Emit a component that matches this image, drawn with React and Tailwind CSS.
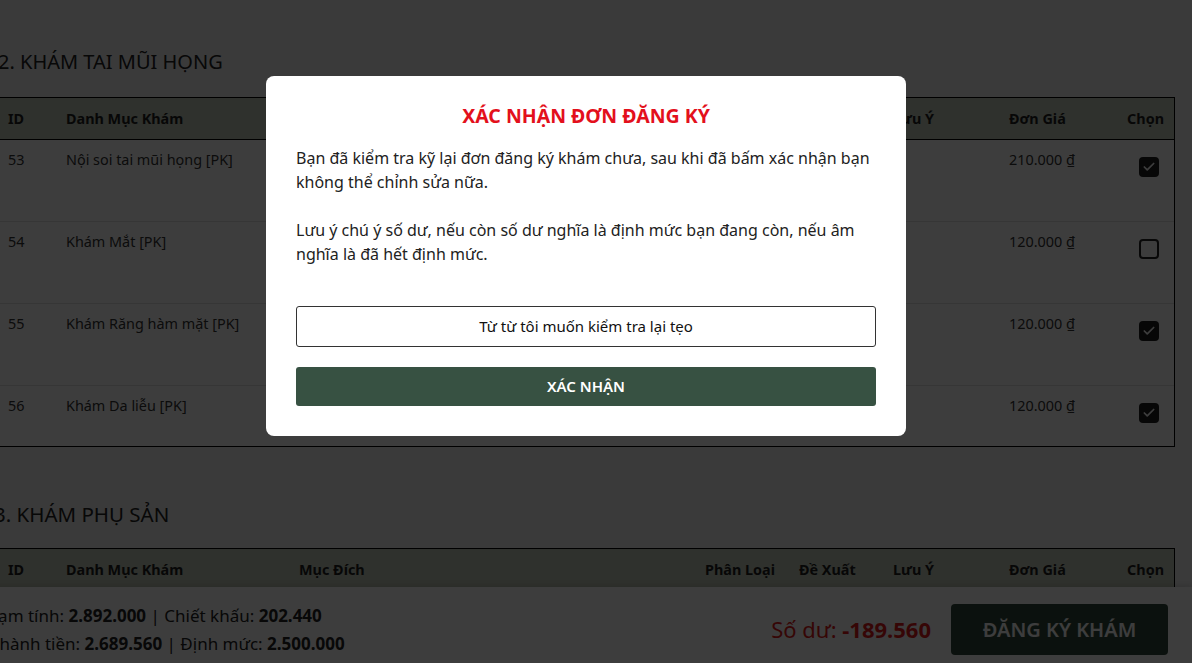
import { Check } from "lucide-react";

const COLS = "grid grid-cols-[58px_233px_406px_94px_94px_116px_119px_1fr]";

const ENT_ROWS = [
  { id: 53, name: "Nội soi tai mũi họng [PK]", price: "210.000", checked: true, h: "h-[82px]" },
  { id: 54, name: "Khám Mắt [PK]", price: "120.000", checked: false, h: "h-[82px]" },
  { id: 55, name: "Khám Răng hàm mặt [PK]", price: "120.000", checked: true, h: "h-[82px]" },
  { id: 56, name: "Khám Da liễu [PK]", price: "120.000", checked: true, h: "h-[60px]" },
];

function HeaderRow() {
  return (
    <div className={`${COLS} h-[42px] items-center bg-[#c4ccbb] border-b border-black text-[14.4px] font-bold text-[#1f1f1f]`}>
      <div className="pl-4">ID</div>
      <div className="pl-4">Danh Mục Khám</div>
      <div className="pl-4">Mục Đích</div>
      <div className="pl-4">Phân Loại</div>
      <div className="pl-4">Đề Xuất</div>
      <div className="pl-4">Lưu Ý</div>
      <div className="pl-4">Đơn Giá</div>
      <div className="pr-[10px] text-right">Chọn</div>
    </div>
  );
}

function Checkbox({ checked }) {
  if (checked) {
    return (
      <div className="w-5 h-5 rounded-[4px] bg-[#1d1d1d] flex items-center justify-center">
        <Check className="w-3.5 h-3.5 text-white" strokeWidth={3} />
      </div>
    );
  }
  return <div className="w-5 h-5 rounded-[4px] border-2 border-[#222] bg-white" />;
}

function Row({ row, last }) {
  return (
    <div className={`${COLS} ${row.h} ${last ? "" : "border-b border-[#e2e2e2]"} text-[14.4px] leading-5 text-[#333]`}>
      <div className="pl-4 py-[10px]">{row.id}</div>
      <div className="pl-4 py-[10px]">{row.name}</div>
      <div className="pl-4 py-[10px]"></div>
      <div className="pl-4 py-[10px]"></div>
      <div className="pl-4 py-[10px]"></div>
      <div className="pl-4 py-[10px]"></div>
      <div className="pl-4 py-[10px]">{row.price} ₫</div>
      <div className="py-[10px] pr-[15px] flex justify-end">
        <div className="mt-[7px]">
          <Checkbox checked={row.checked} />
        </div>
      </div>
    </div>
  );
}

export default function App() {
  return (
    <div className="relative h-[663px] w-[1192px] overflow-hidden bg-[#f2f2f2] font-['Noto_Sans',sans-serif] flex flex-col">
      {/* page content, scrolled slightly to the right */}
      <main className="flex-1 overflow-hidden">
        <div className="-ml-[9px] w-[1184px] pt-[48px]">
          <h2 className="text-[20px] leading-7 text-[#222] mb-[21px] pl-[7px]">2. KHÁM TAI MŨI HỌNG</h2>
          <div className="border border-black bg-white">
            <HeaderRow />
            {ENT_ROWS.map((r, i) => (
              <Row key={r.id} row={r} last={i === ENT_ROWS.length - 1} />
            ))}
          </div>

          <h2 className="text-[20.5px] leading-7 text-[#222] mt-[53px] mb-[20px] pl-[3px]">3. KHÁM PHỤ SẢN</h2>
          <div className="border border-black bg-white">
            <HeaderRow />
          </div>
        </div>
      </main>

      {/* bottom summary bar */}
      <footer className="h-[76px] shrink-0 bg-white shadow-[0_-2px_6px_rgba(0,0,0,0.12)] flex items-center justify-between pt-[9px] -ml-[10px] pr-[24px]">
        <div className="text-[17px] leading-7 text-[#222]">
          <p>
            Tạm tính: <b>2.892.000</b> | Chiết khấu: <b>202.440</b>
          </p>
          <p>
            Thành tiền: <b>2.689.560</b> | Định mức: <b>2.500.000</b>
          </p>
        </div>
        <div className="flex items-center gap-5">
          <span className="text-[22px] text-[#e11b1b]">
            Số dư: <b>-189.560</b>
          </span>
          <button className="w-[217px] h-[51px] rounded-[4px] bg-[#2f4a3a] text-white text-[20px] font-semibold">
            ĐĂNG KÝ KHÁM
          </button>
        </div>
      </footer>

      {/* modal overlay */}
      <div className="absolute inset-0 bg-black/[0.76] flex justify-center items-start pt-[76px] pr-[20px]">
        <div className="w-[640px] bg-white rounded-[8px] px-[30px] pt-[26px] pb-[30px]">
          <h3 className="text-center text-[19.5px] leading-7 font-bold text-[#e3101c]">XÁC NHẬN ĐƠN ĐĂNG KÝ</h3>
          <div className="mt-[16px] text-[16px] leading-6 text-[#222]">
            <p>Bạn đã kiểm tra kỹ lại đơn đăng ký khám chưa, sau khi đã bấm xác nhận bạn không thể chỉnh sửa nữa.</p>
            <p className="mt-6">Lưu ý chú ý số dư, nếu còn số dư nghĩa là định mức bạn đang còn, nếu âm nghĩa là đã hết định mức.</p>
          </div>
          <button className="mt-[40px] w-full h-[41px] border border-[#333] rounded-[3px] bg-white text-[15px] text-[#111]">
            Từ từ tôi muốn kiểm tra lại tẹo
          </button>
          <button className="mt-[20px] w-full h-[39px] rounded-[3px] bg-[#375142] text-white text-[15px] font-semibold">
            XÁC NHẬN
          </button>
        </div>
      </div>
    </div>
  );
}
